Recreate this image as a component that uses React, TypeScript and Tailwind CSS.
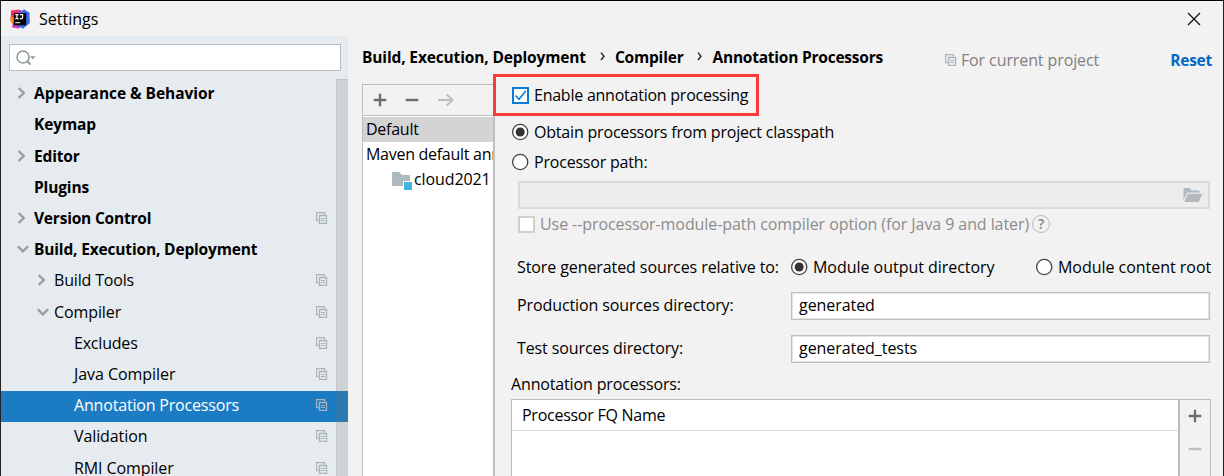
import type { ReactNode } from 'react';

type Arrow = 'right' | 'down' | null;

interface TreeItem {
  label: string;
  indent: string;
  arrow: Arrow;
  bold?: boolean;
  project?: boolean;
  selected?: boolean;
  tracking: string;
}

const tree: TreeItem[] = [
  { label: 'Appearance & Behavior', indent: 'pl-[14px]', arrow: 'right', bold: true, tracking: 'tracking-[-0.05px]' },
  { label: 'Keymap', indent: 'pl-[14px]', arrow: null, bold: true, tracking: 'tracking-[-0.1px]' },
  { label: 'Editor', indent: 'pl-[14px]', arrow: 'right', bold: true, tracking: 'tracking-[-0.15px]' },
  { label: 'Plugins', indent: 'pl-[14px]', arrow: null, bold: true, tracking: 'tracking-[-0.15px]' },
  { label: 'Version Control', indent: 'pl-[14px]', arrow: 'right', bold: true, project: true, tracking: 'tracking-[-0.2px]' },
  { label: 'Build, Execution, Deployment', indent: 'pl-[14px]', arrow: 'down', bold: true, tracking: 'tracking-[-0.16px]' },
  { label: 'Build Tools', indent: 'pl-[34px]', arrow: 'right', project: true, tracking: 'tracking-[-0.17px]' },
  { label: 'Compiler', indent: 'pl-[34px]', arrow: 'down', project: true, tracking: 'tracking-[-0.1px]' },
  { label: 'Excludes', indent: 'pl-[54px]', arrow: null, project: true, tracking: 'tracking-[-0.2px]' },
  { label: 'Java Compiler', indent: 'pl-[54px]', arrow: null, project: true, tracking: 'tracking-[-0.05px]' },
  { label: 'Annotation Processors', indent: 'pl-[54px]', arrow: null, project: true, selected: true, tracking: 'tracking-[-0.18px]' },
  { label: 'Validation', indent: 'pl-[54px]', arrow: null, project: true, tracking: 'tracking-[-0.1px]' },
  { label: 'RMI Compiler', indent: 'pl-[54px]', arrow: null, project: true, tracking: 'tracking-[-0.1px]' },
];

function Logo() {
  return (
    <svg width="20" height="20" viewBox="0 0 20 20">
      <path d="M1 1.500 L9 .5 L11 9 L5 14 L.8 10 Z" fill="#fb2d62" />
      <path d="M0 9 L4 8 L6 15 L3 15.500 L.5 12.500 Z" fill="#fc8a22" />
      <path d="M3 13 L8 13 L12 17 L9 19.500 L2 18.500 Z" fill="#d336c4" />
      <path d="M9 4 L14 .3 L19.500 3.800 L19.800 14 L13 19.700 L8 17 Z" fill="#3b6bea" />
      <path d="M7 1.500 L11 1 L13 5 L8 5 Z" fill="#a544c9" />
      <path d="M3.800 4h12.400v12.300H3.800z" fill="#070707" />
      <path d="M5.200 5.600h3.400M6.900 5.600v4M5.200 9.700h3.400M10 5.600h2.600v2.900q0 1.200-1.200 1.200H9.800" fill="none" stroke="#fff" strokeWidth="1.2" />
      <path d="M5.300 13.700h4.800" stroke="#fff" strokeWidth="1" />
    </svg>
  );
}

function Chevron({ arrow }: { arrow: Arrow }) {
  return (
    <span className="flex w-[19px] shrink-0 items-center">
      {arrow === 'right' && (
        <svg className="ml-[2px]" width="12" height="12" viewBox="0 0 12 12" fill="none" stroke="#999c9f" strokeWidth="2.3">
          <path d="M1.600 1 6.800 6 1.600 11" />
        </svg>
      )}
      {arrow === 'down' && (
        <svg className="ml-[2px]" width="12" height="12" viewBox="0 0 12 12" fill="none" stroke="#999c9f" strokeWidth="2.3">
          <path d="M.7 3.200 5.900 8.300 11.100 3.200" />
        </svg>
      )}
    </span>
  );
}

function ProjectIcon() {
  return (
    <svg className="shrink-0" width="12" height="12" viewBox="0 0 12 12" fill="none" stroke="#aab4bb">
      <path d="M2.500 8.500h-2v-8h8v2" strokeWidth="1.3" />
      <path d="M3.500 3.500h7v8h-7z" strokeWidth="1.3" />
      <path d="M5 6.500h4M5 8.500h4" />
    </svg>
  );
}

function Plus({ color }: { color: string }) {
  return (
    <svg width="14" height="14" viewBox="0 0 14 14" stroke={color} strokeWidth="2.4">
      <path d="M.7 7h12.600M7 .7v12.600" />
    </svg>
  );
}

function Minus({ color }: { color: string }) {
  return (
    <svg width="14" height="14" viewBox="0 0 14 14" stroke={color} strokeWidth="2.4">
      <path d="M.7 7h12.600" />
    </svg>
  );
}

function Radio({ checked = false }: { checked?: boolean }) {
  return (
    <svg className="shrink-0" width="18" height="18" viewBox="0 0 18 18">
      <circle cx="9.2" cy="9" r="7.6" fill="#fff" stroke="#444" strokeWidth="1.3" />
      {checked && <circle cx="9.2" cy="9" r="4.5" fill="#333" />}
    </svg>
  );
}

function Field({ children }: { children: ReactNode }) {
  return (
    <div className="flex h-[28px] w-[419px] items-center border border-[#bfbfbf] bg-white pb-[2px] pl-[7px] tracking-[-0.06px] shadow-[inset_0_0_0_1px_#e4e4e4]">
      {children}
    </div>
  );
}

function Sidebar() {
  return (
    <aside className="relative flex w-[347px] shrink-0 flex-col bg-[#e6ebef]">
      <div className="mt-[8px] ml-[8px] flex h-[27px] w-[332px] shrink-0 items-center border border-[#b8bbbe] bg-white pl-[5px]">
        <svg width="22" height="17" viewBox="0 0 22 17">
          <circle cx="8" cy="8" r="6" fill="none" stroke="#8f979c" strokeWidth="1.5" />
          <path d="M12 12l3.400 3.600" stroke="#8f979c" strokeWidth="2" />
          <path d="M15 7.200h5.400l-2.700 3z" fill="#8f979c" />
        </svg>
      </div>
      <div className="mt-[8px] flex flex-col">
        {tree.map((item) => (
          <div
            key={item.label}
            className={`flex h-[31.2px] shrink-0 items-center pb-[2.6px] ${item.indent} ${item.selected ? 'bg-[#1b7cc4] text-white' : ''}`}
          >
            <Chevron arrow={item.arrow} />
            <span className={`grow ${item.tracking} ${item.bold ? 'text-[15.5px] font-bold' : ''}`}>{item.label}</span>
            {item.project && (
              <span className="mr-[20px] flex">
                <ProjectIcon />
              </span>
            )}
          </div>
        ))}
      </div>
      <div className="absolute top-[43px] right-0 bottom-0 w-[12px] border-t border-l border-[#73737320] bg-[#73737333]" />
    </aside>
  );
}

function ProfileList() {
  return (
    <div className="ml-[14px] flex w-[131px] shrink-0 flex-col overflow-hidden border-t border-l border-[#bdbdbd] bg-white">
      <div className="flex h-[31px] shrink-0 items-center gap-[18px] border-b border-[#bdbdbd] bg-[#f2f2f2] pl-[10px]">
        <Plus color="#6e6e6e" />
        <Minus color="#6e6e6e" />
        <svg width="18" height="14" viewBox="0 0 18 14" fill="none" stroke="#bdbdbd" strokeWidth="2">
          <path d="M1 7h14.500M9.800 1.500 15.500 7 9.800 12.500" />
        </svg>
      </div>
      <div className="mt-px flex h-[25px] shrink-0 items-center bg-[#d4d4d4] pb-[2px] pl-[3px] tracking-[-0.25px]">Default</div>
      <div className="flex h-[25px] shrink-0 items-center pb-[2px] pl-[3px] tracking-[-0.28px]">Maven default ann</div>
      <div className="flex h-[25px] shrink-0 items-center gap-[2px] pb-[2px] pl-[29px]">
        <svg className="mt-[5px]" width="20" height="18" viewBox="0 0 20 18">
          <path d="M0 0h7l3 3h8v11H0z" fill="#adb8bf" />
          <path d="M11 9h9v9h-9z" fill="#fff" />
          <path d="M12 10h8v8h-8z" fill="#40b6e0" />
        </svg>
        <span className="tracking-[-0.1px]">cloud2021</span>
      </div>
    </div>
  );
}

function ProcessorForm() {
  return (
    <div className="flex grow flex-col border-l-2 border-[#c0c0c0]">
      <div className="flex h-[26px] shrink-0 items-center pb-[4px] pl-[17px] tracking-[-0.24px]">
        <svg className="mr-[5px]" width="17" height="17" viewBox="0 0 17 17">
          <path d="M1 1h15v15H1z" fill="#fff" stroke="#0a7bd6" strokeWidth="2" />
          <path d="M3.500 8.500 7 12.300 13.700 4" fill="none" stroke="#0a7bd6" strokeWidth="1.500" />
        </svg>
        Enable annotation processing
      </div>
      <div className="mt-[7px] flex h-[30px] shrink-0 items-center gap-[5px] pl-[16px] tracking-[-0.19px]">
        <Radio checked />
        Obtain processors from project classpath
      </div>
      <div className="flex h-[30px] shrink-0 items-center gap-[5px] pl-[16px] tracking-[-0.2px]">
        <Radio />
        Processor path:
      </div>
      <div className="mt-[4px] ml-[23px] flex h-[28px] w-[692px] shrink-0 items-center justify-end border-2 border-[#dadada] bg-[#ececec] pr-[5px]">
        <svg width="20" height="15" viewBox="0 0 20 15" fill="#b3babf">
          <path d="M.5 0h6l2 2.400h8V4.600H4.200L.5 12z" />
          <path d="M4.900 5.700H19.300L15.800 14H1.200z" />
        </svg>
      </div>
      <div className="flex h-[30px] shrink-0 items-center pl-[23px] tracking-[-0.08px] text-[#8c8c8c]">
        <span className="mr-[5px] size-[17px] border-2 border-[#cfcfcf] bg-white" />
        Use --processor-module-path compiler option (for Java 9 and later)
        <span className="ml-[3px] flex size-[18px] items-center justify-center rounded-full border-[1.5px] border-[#b4bdc3] text-[14px] font-semibold text-[#7e8386]">
          ?
        </span>
      </div>
      <div className="mt-[13px] flex h-[30px] shrink-0 items-center">
        <span className="w-[295px] pl-[22px] tracking-[-0.09px]">Store generated sources relative to:</span>
        <span className="flex w-[245px] items-center gap-[5px] tracking-[-0.03px]">
          <Radio checked />
          Module output directory
        </span>
        <span className="flex items-center gap-[5px] tracking-[-0.03px]">
          <Radio />
          Module content root
        </span>
      </div>
      <div className="mt-[10px] flex h-[28px] shrink-0 items-center">
        <span className="w-[296px] pb-[2px] pl-[22px] tracking-[-0.1px]">Production sources directory:</span>
        <Field>generated</Field>
      </div>
      <div className="mt-[15px] flex h-[28px] shrink-0 items-center">
        <span className="w-[296px] pb-[2px] pl-[22px] tracking-[-0.1px]">Test sources directory:</span>
        <Field>generated_tests</Field>
      </div>
      <div className="mt-[11px] flex h-[20px] shrink-0 items-center pl-[16px] tracking-[-0.15px]">Annotation processors:</div>
      <div className="mt-[5px] ml-[16px] flex h-[90px] w-[700px] shrink-0 border border-[#bdbdbd]">
        <div className="grow bg-white">
          <div className="flex h-[31px] items-center border-b border-[#dedede] pl-[10px] tracking-[-0.26px]">Processor FQ Name</div>
        </div>
        <div className="flex w-[32px] flex-col items-center gap-[19px] border-l-2 border-[#bdbdbd] pt-[9px]">
          <Plus color="#6e6e6e" />
          <Minus color="#bdbdbd" />
        </div>
      </div>
    </div>
  );
}

function Crumb() {
  return (
    <svg className="mr-[9px] ml-[14px] -mt-[2px]" width="6" height="9" viewBox="0 0 6 9" fill="none" stroke="#222" strokeWidth="1.400">
      <path d="M1 .6 4 4.300 1 8" />
    </svg>
  );
}

export default function App() {
  return (
    <div className="flex h-[476px] w-[1224px] flex-col overflow-hidden border-x border-t border-x-[#222] border-t-black bg-[#f2f2f2] font-['Open_Sans','Noto_Sans',sans-serif] text-[16px] leading-[22px] whitespace-nowrap text-black">
      <header className="flex h-[35px] shrink-0 items-center">
        <span className="ml-[9px]">
          <Logo />
        </span>
        <span className="ml-[9px]">Settings</span>
        <svg className="mr-[22px] ml-auto" width="14" height="14" viewBox="0 0 14 14" stroke="#111" strokeWidth="1.300">
          <path d="M1 1l12 12M13 1 1 13" />
        </svg>
      </header>
      <div className="flex min-h-0 grow">
        <Sidebar />
        <main className="flex min-w-0 grow flex-col">
          <div className="flex h-[48px] shrink-0 items-center pb-[6px] pl-[14px] text-[15.5px] font-bold">
            <span className="tracking-[-0.14px]">Build, Execution, Deployment</span>
            <Crumb />
            <span className="tracking-[-0.2px]">Compiler</span>
            <Crumb />
            <span className="tracking-[-0.23px]">Annotation Processors</span>
            <span className="mt-[6px] ml-[62px] flex items-center gap-[4px] text-[16px] font-normal tracking-[-0.1px] text-[#808080]">
              <ProjectIcon />
              For current project
            </span>
            <span className="mt-[6px] mr-[11px] ml-auto tracking-[-0.25px] text-[#0068c6]">Reset</span>
          </div>
          <div className="relative flex min-h-0 grow">
            <ProfileList />
            <ProcessorForm />
            <div className="pointer-events-none absolute -top-[10px] left-[145px] h-[42px] w-[266px] border-[3px] border-[#fb3a3a]" />
          </div>
        </main>
      </div>
    </div>
  );
}
